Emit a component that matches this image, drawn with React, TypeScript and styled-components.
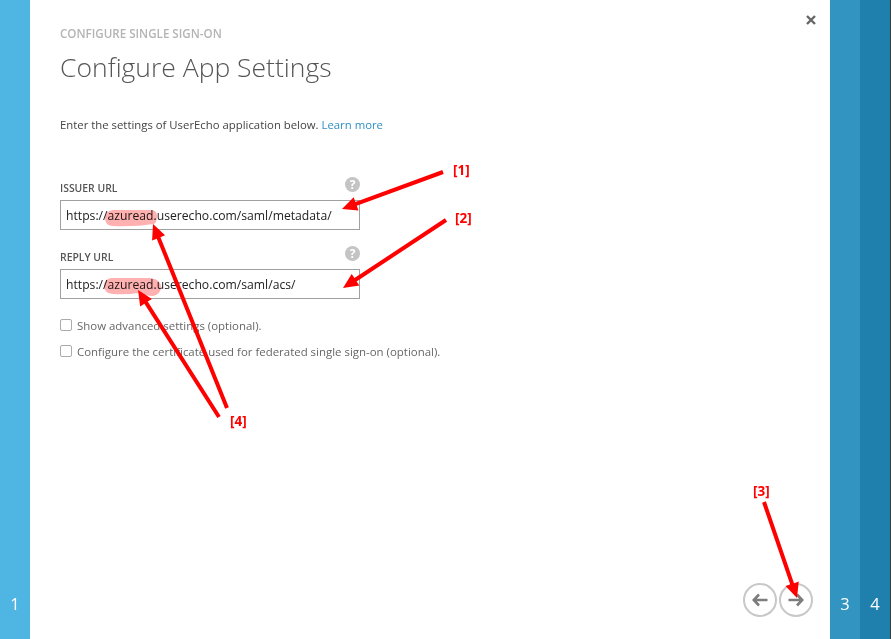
import React from 'react';
import styled, { createGlobalStyle } from 'styled-components';

const GlobalStyle = createGlobalStyle`
    html, body { margin: 0; padding: 0; background: #fff; }
    body { font-family: "Open Sans", "Noto Sans", "Liberation Sans", sans-serif; }
`;

const Page = styled.div`
    position: relative;
    display: flex;
    width: 891px;
    height: 639px;
    overflow: hidden;
    background: #3a3a3a;
`;

const StepRail = styled.div<{ $color: string }>`
    display: flex;
    flex: 0 0 30px;
    align-items: flex-end;
    justify-content: center;
    padding-bottom: 24px;
    box-sizing: border-box;
    background: ${(p) => p.$color};
    color: #fff;
    font-size: 16.5px;
    font-weight: 500;
    line-height: 22px;
`;

const Content = styled.main`
    position: relative;
    display: flex;
    flex: 0 0 800px;
    flex-direction: column;
    box-sizing: border-box;
    padding: 27px 30px 22px;
    background: #fff;
`;

const CloseButton = styled.div`
    position: absolute;
    top: 15px;
    right: 14px;
    width: 10px;
    height: 10px;
    display: flex;
`;

const Eyebrow = styled.div`
    font-size: 11.6px;
    line-height: 14px;
    font-weight: 600;
    color: #b4b4b4;
`;

const Title = styled.h1`
    margin: 8px 0 0;
    font-size: 26.5px;
    line-height: 36px;
    font-weight: 300;
    color: #555;
`;

const Intro = styled.p`
    margin: 32px 0 0;
    font-size: 11.35px;
    line-height: 16px;
    color: #444;
`;

const LearnMore = styled.a`
    color: #2f8fc4;
    text-decoration: none;
`;

const Form = styled.div`
    display: flex;
    width: 300px;
    flex-direction: column;
    margin-top: 44px;
`;

const Field = styled.div`
    display: flex;
    flex-direction: column;
    margin-bottom: 16px;

    & + & {
        margin-bottom: 13px;
    }
`;

const LabelRow = styled.div`
    display: flex;
    height: 23px;
    align-items: center;
    justify-content: space-between;
`;

const FieldLabel = styled.label`
    margin-top: -1px;
    font-size: 10.4px;
    font-weight: 600;
    color: #555;
`;

const HelpIcon = styled.span`
    display: flex;
    width: 15px;
    height: 15px;
    margin-top: -8px;
    align-items: center;
    justify-content: center;
    border-radius: 50%;
    background: #c4c4c4;
    color: #fff;
    font-size: 12px;
    font-weight: 700;
`;

const UrlBox = styled.div`
    display: flex;
    height: 30px;
    align-items: center;
    box-sizing: border-box;
    padding: 0 5px;
    border: 1px solid #a0a0a0;
    color: #222;
    font-size: 12.18px;
`;

const CheckRow = styled.label`
    display: flex;
    height: 26px;
    align-items: center;
    gap: 5px;
    font-size: 11.45px;
    color: #666;
    white-space: nowrap;
`;

const Checkbox = styled.span`
    flex: 0 0 auto;
    width: 10px;
    height: 10px;
    border: 1px solid #aaa;
    border-radius: 2px;
`;

const Footer = styled.div`
    display: flex;
    gap: 2px;
    margin-top: auto;
    justify-content: flex-end;
    margin-right: -13px;
`;

const RoundButton = styled.div`
    display: flex;
    width: 34px;
    height: 34px;
    box-sizing: border-box;
    align-items: center;
    justify-content: center;
    border: 2px solid #c8c8c8;
    border-radius: 50%;
`;

const Overlay = styled.svg`
    position: absolute;
    top: 0;
    left: 0;
    pointer-events: none;
`;

const Highlight = styled.path`
    fill: #ffb0b0;
    mix-blend-mode: multiply;
`;

const Tag = styled.span<{ $x: number; $y: number }>`
    position: absolute;
    left: ${(p) => p.$x}px;
    top: ${(p) => p.$y}px;
    color: #f00;
    font-size: 13.5px;
    line-height: 16px;
    font-weight: 700;
`;

const arrows = [
    [443, 172, 342, 209],
    [446, 220, 343, 288],
    [227, 408, 153, 224],
    [219, 417, 138, 290],
    [764, 502, 797, 598],
];

// tapered shaft plus head, same look as the hand-drawn annotation arrows
const arrowPoints = ([x1, y1, x2, y2]: number[]) => {
    const len = Math.hypot(x2 - x1, y2 - y1);
    const ux = (x2 - x1) / len;
    const uy = (y2 - y1) / len;
    const nx = -uy;
    const ny = ux;
    const bx = x2 - ux * 15;
    const by = y2 - uy * 15;
    const pt = (x: number, y: number, w: number) => `${x + nx * w},${y + ny * w}`;
    return [
        pt(x1, y1, 2),
        pt(bx, by, 2),
        pt(bx, by, 7),
        `${x2},${y2}`,
        pt(bx, by, -7),
        pt(bx, by, -2),
        pt(x1, y1, -2),
    ].join(' ');
};

const ArrowIcon: React.FC<{ flip?: boolean }> = ({ flip }) => (
    <svg width="16" height="14" viewBox="0 0 16 14" style={flip ? { transform: 'scaleX(-1)' } : undefined}>
        <path d="M7 1.5 1.8 7 7 12.5M2 7h13.5" fill="none" stroke="#7d7d7d" strokeWidth="2.6" />
    </svg>
);

const App: React.FC = () => (
    <>
        <GlobalStyle />
        <Page>
            <StepRail $color="#4fb6e4">1</StepRail>
            <Content>
                <CloseButton>
                    <svg width="10" height="10" viewBox="0 0 10 10">
                        <path d="M1 1l8 8M9 1 1 9" stroke="#666" strokeWidth="2.4" />
                    </svg>
                </CloseButton>
                <Eyebrow>CONFIGURE SINGLE SIGN-ON</Eyebrow>
                <Title>Configure App Settings</Title>
                <Intro>
                    Enter the settings of UserEcho application below. <LearnMore>Learn more</LearnMore>
                </Intro>
                <Form>
                    <Field>
                        <LabelRow>
                            <FieldLabel>ISSUER URL</FieldLabel>
                            <HelpIcon>?</HelpIcon>
                        </LabelRow>
                        <UrlBox>https://azuread.userecho.com/saml/metadata/</UrlBox>
                    </Field>
                    <Field>
                        <LabelRow>
                            <FieldLabel>REPLY URL</FieldLabel>
                            <HelpIcon>?</HelpIcon>
                        </LabelRow>
                        <UrlBox>https://azuread.userecho.com/saml/acs/</UrlBox>
                    </Field>
                    <CheckRow>
                        <Checkbox />
                        Show advanced settings (optional).
                    </CheckRow>
                    <CheckRow>
                        <Checkbox />
                        Configure the certificate used for federated single sign-on (optional).
                    </CheckRow>
                </Form>
                <Footer>
                    <RoundButton><ArrowIcon /></RoundButton>
                    <RoundButton><ArrowIcon flip /></RoundButton>
                </Footer>
            </Content>
            <StepRail $color="#3294c0">3</StepRail>
            <StepRail $color="#1f80ae">4</StepRail>

            <Overlay width="891" height="639" viewBox="0 0 891 639">
                <Highlight d="M113 210h38q6 0 6 6t-3 8q-20 3-42 2-7-1-7-8t8-8z" />
                <Highlight d="M111 278h40q10 2 10 9t-8 9q-8 0-14-3-14 2-26 1-9-1-9-8t7-8z" />
                {arrows.map((a) => (
                    <polygon key={a.join()} points={arrowPoints(a)} fill="#f00" />
                ))}
            </Overlay>
            <Tag $x={453} $y={162}>[1]</Tag>
            <Tag $x={455} $y={210}>[2]</Tag>
            <Tag $x={753} $y={483}>[3]</Tag>
            <Tag $x={230} $y={413}>[4]</Tag>
        </Page>
    </>
);

export default App;
